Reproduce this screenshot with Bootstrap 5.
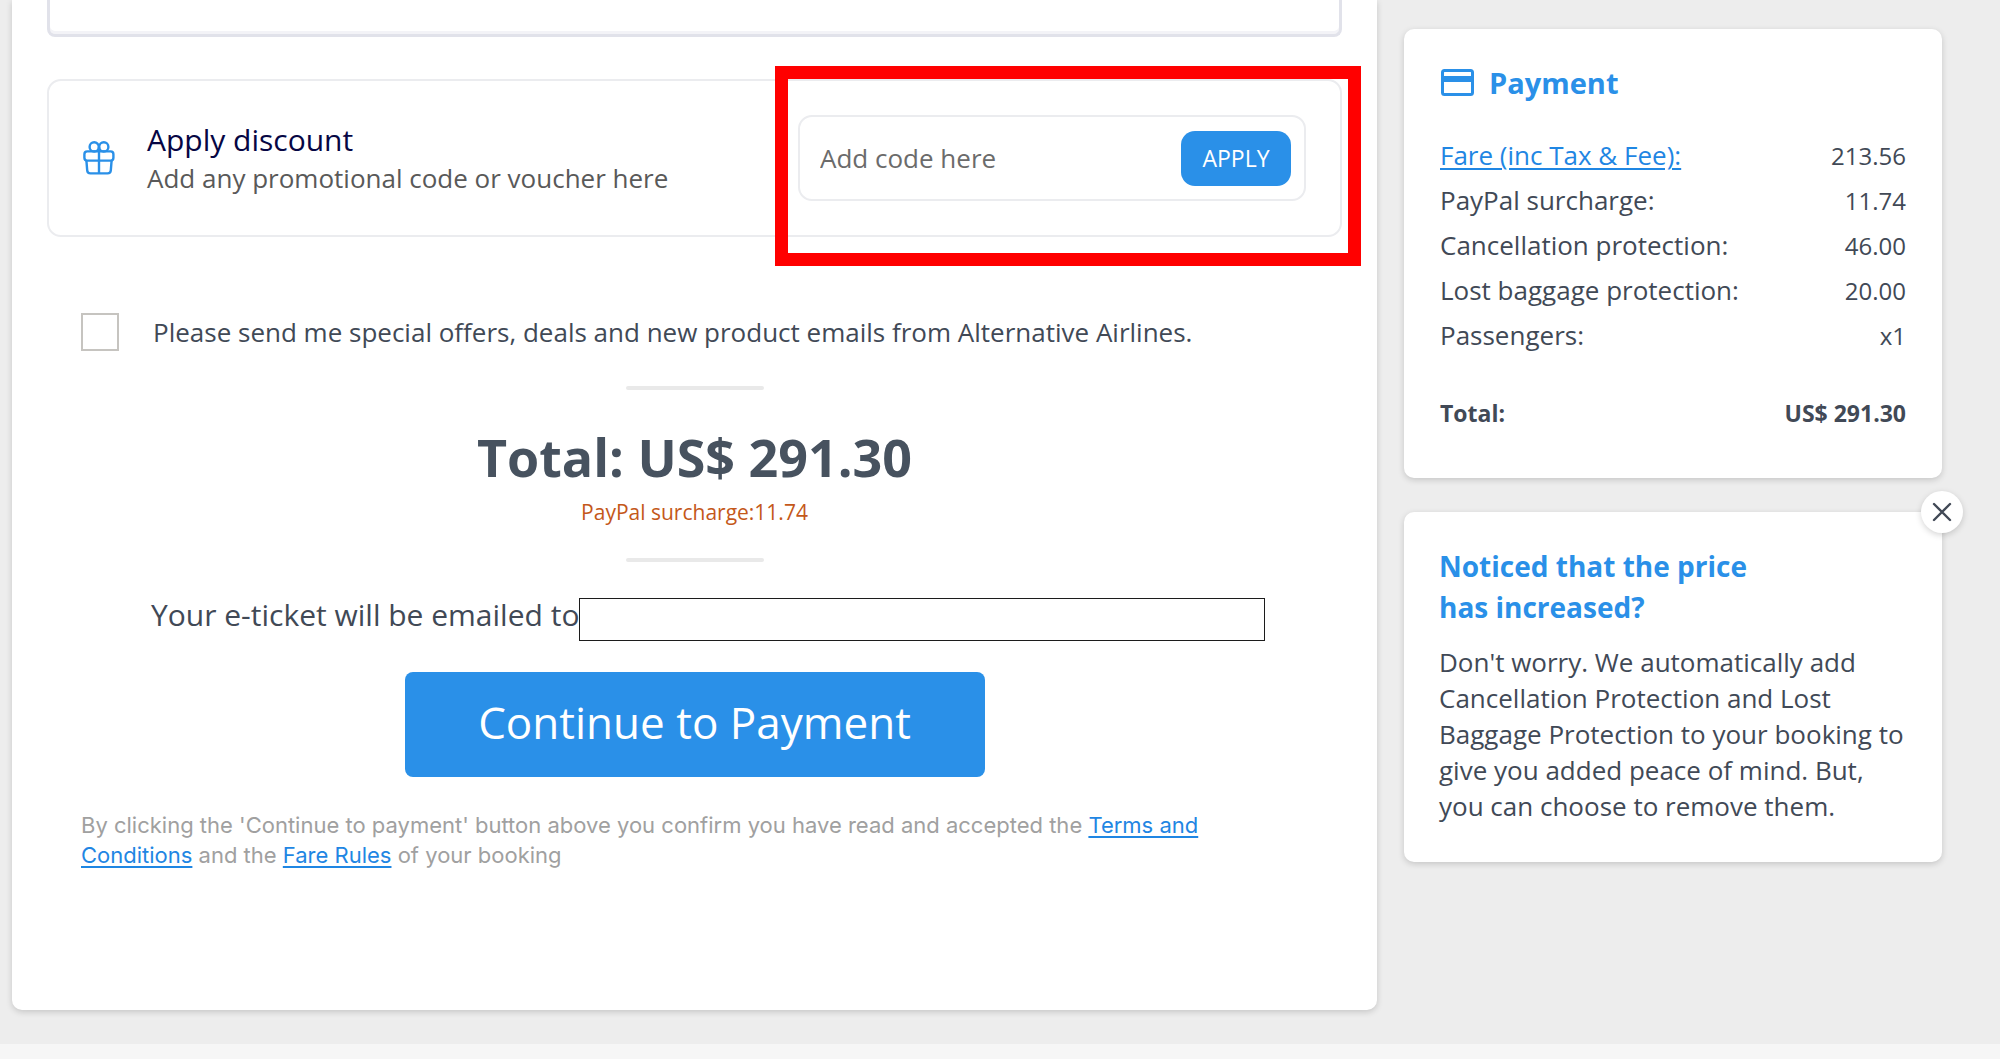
<!DOCTYPE html>
<html lang="en">
<head>
<meta charset="utf-8">
<meta name="viewport" content="width=device-width, initial-scale=1">
<title>Payment</title>
<link href="https://cdn.jsdelivr.net/npm/bootstrap@5.3.0/dist/css/bootstrap.min.css" rel="stylesheet">
<style>
  :root { --brand: #2a90e8; --ink: #414956; --line: #ebecef; }
  body { background: #ededed; color: var(--ink); font-family: "Open Sans", sans-serif; font-size: 26px; line-height: 36px; }
  a { color: #1f86e3; text-decoration-thickness: 2px; text-underline-offset: 3px; }
  a:hover { color: #1668b5; }
  .page-wrap { display: flex; align-items: flex-start; gap: 27px; padding: 0 58px 34px 12px; }
  .checkout { flex: 1; min-width: 0; padding: 0 35px 140px 35px; border-radius: 0 0 10px 10px; }
  .side-col { flex: 0 0 538px; padding-top: 29px; display: flex; flex-direction: column; gap: 34px; }
  .panel { background: #fff; box-shadow: 0 2px 6px rgba(0, 0, 0, .17); }
  .side-panel { border-radius: 10px; padding: 34px 35px 38px; position: relative; }
  .detail-field { display: block; width: 100%; height: 37px; border: 3px solid #e1e2ea; border-top: 0; border-radius: 0 0 8px 8px; box-shadow: inset 0 -3px 0 #f3f3f7; background: #fff; }
  .discount { margin-top: 42px; min-height: 158px; padding: 0 34px; border: 2px solid var(--line); border-radius: 14px; }
  .discount-title { font-size: 30px; line-height: 40px; color: #060644; }
  .discount-sub { color: #595959; }
  .code-group { position: relative; flex: 0 1 508px; height: 86px; padding: 0 13px 0 20px; border: 2px solid var(--line); border-radius: 14px; }
  .code-group input { border: 0; background: none; flex: 1; min-width: 0; padding: 0; color: #6b6b6b; }
  .code-group input::placeholder { color: #6b6b6b; }
  .btn-brand { --bs-btn-bg: var(--brand); --bs-btn-color: #fff; --bs-btn-hover-bg: #1f7fd3; --bs-btn-hover-color: #fff; --bs-btn-active-bg: #1a72bf; --bs-btn-active-color: #fff; border: 0; }
  .btn-apply { width: 110px; height: 55px; padding: 0; border-radius: 14px; font-size: 23px; font-weight: 500; }
  .callout { position: absolute; inset: -51px -57px -67px -25px; border: 13px solid #f00; pointer-events: none; }
  .offers { margin-top: 76px; padding-left: 34px; gap: 34px; }
  .offers .form-check-input { width: 38px; height: 38px; margin: 0; border: 2px solid #c6c4c0; border-radius: 0; flex: none; }
  .totals { margin-top: 35px; }
  .divider { width: 138px; height: 4px; margin: 0 auto; border: 0; border-radius: 2px; background: #e9e9e9; opacity: 1; }
  .grand-total { margin: 37px 0 10px; font-size: 52px; line-height: 60px; font-weight: 700; color: #47525f; }
  .surcharge { margin-bottom: 31px; font-size: 21px; line-height: 30px; color: #c4581a; }
  .eticket { margin: 36px 77px 31px 104px; font-size: 30px; line-height: 34px; }
  .eticket input { flex: 1; min-width: 0; height: 43px; border: 1px solid #1c1c1c; background: #fff; }
  .btn-continue { width: 580px; max-width: 100%; height: 105px; padding: 0 0 6px; border-radius: 8px; font-size: 44px; }
  .legal { margin: 33px 130px 0 34px; font-family: Inter, sans-serif; font-size: 22px; line-height: 30px; color: #a0a0a0; }
  .pay-title { gap: 14px; margin-bottom: 30px; font-size: 29px; line-height: 40px; font-weight: 700; color: var(--brand); }
  .fare-table { width: 100%; margin-bottom: 4px; line-height: 43px; }
  .fare-table th { font-weight: 400; }
  .fare-table td { text-align: right; font-size: 24px; }
  .fare-table tfoot th, .fare-table tfoot td { padding-top: 34px; font-size: 23px; font-weight: 700; }
  .notice-title { margin-bottom: 16px; font-size: 28px; line-height: 41px; font-weight: 700; color: var(--brand); }
  .btn-dismiss { position: absolute; top: -21px; right: -21px; width: 42px; height: 42px; padding: 0; border: 0; border-radius: 50%; display: flex; align-items: center; justify-content: center; }
  .foot-strip { height: 15px; background: #f6f6f6; }
  @media (max-width: 1400px) {
    .page-wrap { flex-direction: column; align-items: stretch; padding-right: 12px; }
    .side-col { flex-basis: auto; }
  }
</style>
<script src="https://cdn.jsdelivr.net/npm/bootstrap@5.3.0/dist/js/bootstrap.bundle.min.js"></script>
</head>
<body>
<div class="page-wrap">
  <main class="checkout panel">
    <input class="detail-field" type="text" aria-label="Additional details">

    <section class="discount d-flex align-items-center">
      <svg class="flex-shrink-0" width="32" height="34" viewBox="0 0 32 34" fill="none" stroke="#2a90e8" stroke-width="2.4" aria-hidden="true">
        <rect x="1.4" y="10.4" width="29" height="9.2" rx="2.8"/>
        <path d="M3.4 19.6l.8 9.8q.2 3 3.2 3h17.2q3 0 3.2-3l.8-9.8M16 6v26.4"/>
        <ellipse cx="11.2" cy="5.9" rx="4.6" ry="4.6"/>
        <ellipse cx="20.8" cy="5.9" rx="4.6" ry="4.6"/>
      </svg>
      <div class="ms-4 ps-2 me-auto">
        <div class="discount-title">Apply discount</div>
        <div class="discount-sub">Add any promotional code or voucher here</div>
      </div>
      <form class="code-group d-flex align-items-center">
        <input type="text" placeholder="Add code here" aria-label="Discount code">
        <button type="button" class="btn btn-brand btn-apply">APPLY</button>
        <span class="callout"></span>
      </form>
    </section>

    <div class="offers d-flex align-items-center">
      <input class="form-check-input" type="checkbox" id="offers">
      <label for="offers">Please send me special offers, deals and new product emails from Alternative Airlines.</label>
    </div>

    <section class="totals text-center">
      <hr class="divider">
      <h1 class="grand-total">Total: US$ 291.30</h1>
      <p class="surcharge">PayPal surcharge:11.74</p>
      <hr class="divider">
    </section>

    <div class="eticket d-flex align-items-start">
      <label for="email">Your e-ticket will be emailed to</label>
      <input type="email" id="email">
    </div>
    <div class="d-flex justify-content-center">
      <button type="button" class="btn btn-brand btn-continue">Continue to Payment</button>
    </div>
    <p class="legal">By clicking the 'Continue to payment' button above you confirm you have read and accepted the <a href="#">Terms and Conditions</a> and the <a href="#">Fare Rules</a> of your booking</p>
  </main>

  <aside class="side-col">
    <section class="panel side-panel">
      <h2 class="pay-title d-flex align-items-center">
        <svg width="36" height="28" viewBox="0 0 36 28" aria-hidden="true">
          <rect x="3.5" y="1.5" width="30" height="24" rx="2" fill="none" stroke="#2a90e8" stroke-width="3"/>
          <path d="M3 7h31v6H3z" fill="#2a90e8"/>
        </svg>
        Payment
      </h2>
      <table class="fare-table">
        <tbody>
          <tr><th scope="row"><a href="#">Fare (inc Tax &amp; Fee):</a></th><td>213.56</td></tr>
          <tr><th scope="row">PayPal surcharge:</th><td>11.74</td></tr>
          <tr><th scope="row">Cancellation protection:</th><td>46.00</td></tr>
          <tr><th scope="row">Lost baggage protection:</th><td>20.00</td></tr>
          <tr><th scope="row">Passengers:</th><td>x1</td></tr>
        </tbody>
        <tfoot>
          <tr><th scope="row">Total:</th><td>US$ 291.30</td></tr>
        </tfoot>
      </table>
    </section>

    <section class="panel side-panel">
      <button type="button" class="btn-dismiss panel" aria-label="Close">
        <svg width="20" height="20" viewBox="0 0 20 20" stroke="#414956" stroke-width="2.4" stroke-linecap="round" aria-hidden="true"><path d="M2 2l16 16M18 2L2 18"/></svg>
      </button>
      <h2 class="notice-title">Noticed that the price<br>has increased?</h2>
      <p class="mb-0">Don't worry. We automatically add Cancellation Protection and Lost Baggage Protection to your booking to give you added peace of mind. But, you can choose to remove them.</p>
    </section>
  </aside>
</div>
<footer class="foot-strip"></footer>
</body>
</html>
